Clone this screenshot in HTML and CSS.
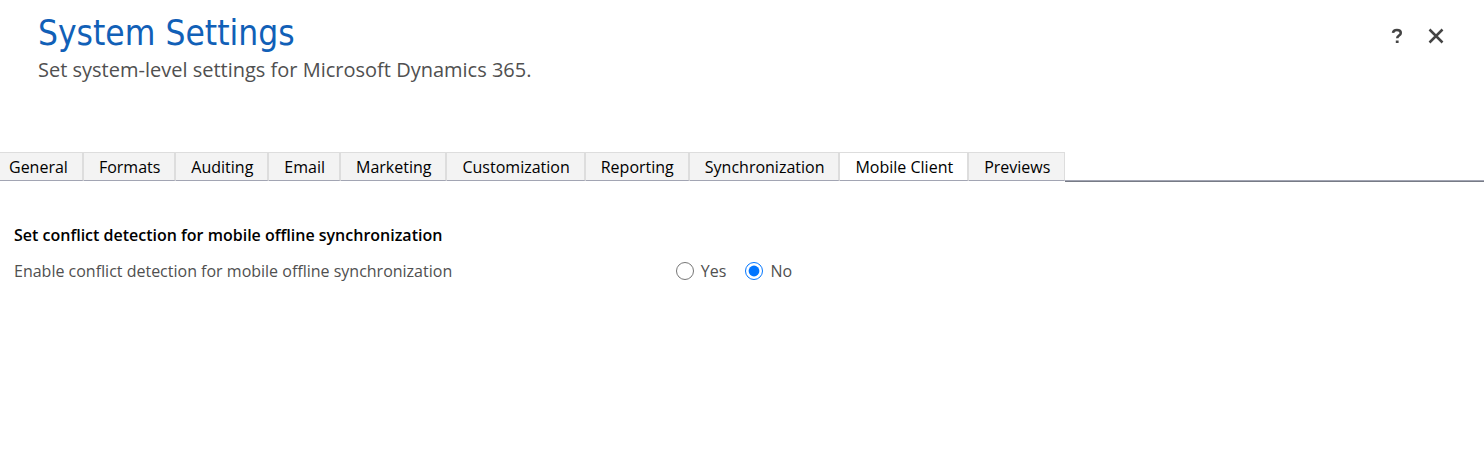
FILE: index.html
```html
<!DOCTYPE html>
<html lang="en">
<head>
<meta charset="utf-8">
<meta name="viewport" content="width=device-width, initial-scale=1">
<title>System Settings</title>
<link rel="stylesheet" href="styles.css">
</head>
<body>
<header class="header">
  <div class="heading">
    <h1 class="title">System Settings</h1>
    <p class="subtitle">Set system-level settings for Microsoft Dynamics 365.</p>
  </div>
  <div class="actions">
    <button class="icon-button" type="button" aria-label="Help">
      <svg class="icon" viewBox="0 0 16 16" aria-hidden="true"><path d="M4 4.800C4.200 2.900 5.800 2 7.900 2c2.300 0 3.900 1 3.900 2.900 0 2.700-3.600 2.600-3.600 5.400"/><path d="M8.200 12.500v2.500" stroke-width="2.800"/></svg>
    </button>
    <button class="icon-button" type="button" aria-label="Close">
      <svg class="icon" viewBox="0 0 16 16" aria-hidden="true"><path d="M1.500 1.500l13 13M14.500 1.500l-13 13"/></svg>
    </button>
  </div>
</header>
<nav class="tabs" aria-label="Settings">
  <a class="tab" href="#general">General</a>
  <a class="tab" href="#formats">Formats</a>
  <a class="tab" href="#auditing">Auditing</a>
  <a class="tab" href="#email">Email</a>
  <a class="tab" href="#marketing">Marketing</a>
  <a class="tab" href="#customization">Customization</a>
  <a class="tab" href="#reporting">Reporting</a>
  <a class="tab" href="#synchronization">Synchronization</a>
  <a class="tab tab-active" href="#mobile" aria-current="page">Mobile Client</a>
  <a class="tab" href="#previews">Previews</a>
  <span class="rule"></span>
</nav>
<main class="content" id="mobile">
  <h2 class="section-title">Set conflict detection for mobile offline synchronization</h2>
  <div class="setting" role="radiogroup" aria-labelledby="conflict-label">
    <span class="setting-label" id="conflict-label">Enable conflict detection for mobile offline synchronization</span>
    <div class="options">
      <label class="option"><input class="radio" type="radio" name="conflict" value="yes">Yes</label>
      <label class="option"><input class="radio" type="radio" name="conflict" value="no" checked>No</label>
    </div>
  </div>
</main>
</body>
</html>
```
FILE: styles.css
```css
* {
  box-sizing: border-box;
}

body {
  margin: 0;
  background: #fff;
  color: #000;
  font: 400 16px/24px "Open Sans", "Noto Sans", sans-serif;
}

.header {
  display: flex;
  justify-content: space-between;
  padding: 10px 36px 68px 38px;
}

.title {
  margin: 0;
  color: #1160b7;
  font: 400 35px/46px "DejaVu Sans Condensed", "DejaVu Sans", sans-serif;
}

.subtitle {
  margin: 0;
  color: #505050;
  font-size: 20px;
  line-height: 28px;
}

.actions {
  display: flex;
  gap: 15px;
  padding-top: 14px;
}

.icon-button {
  display: flex;
  align-items: center;
  justify-content: center;
  width: 24px;
  height: 24px;
  padding: 0;
  border: 0;
  background: none;
}

.icon {
  width: 16px;
  height: 16px;
  fill: none;
  stroke: #444;
  stroke-width: 2.5;
}

.tabs {
  display: flex;
}

.tab {
  height: 29px;
  padding: 2px 14px 0 15px;
  border-top: 1px solid #ddd;
  border-right: 2px solid #ddd;
  border-bottom: 1px solid #a2a5b3;
  background: #f3f3f3;
  color: #000;
  text-decoration: none;
  white-space: nowrap;
}

.tab:first-child {
  padding-left: 9px;
}

.tab:nth-last-child(2) {
  border-right-width: 1px;
}

.tab-active {
  background: #fff;
}

.rule {
  flex: 1;
  height: 30px;
  border-top: 28px solid transparent;
  background: linear-gradient(#a2a5b3 50%, #777b86 50%) padding-box;
}

.content {
  padding: 41px 14px;
}

.section-title {
  margin: 0 0 12px;
  font-size: 16px;
  font-weight: 600;
  line-height: 24px;
}

.setting {
  display: grid;
  grid-template-columns: 5fr 6fr;
  color: #505050;
}

.options {
  display: flex;
  gap: 19px;
}

.option {
  display: flex;
  align-items: center;
  gap: 7px;
}

.radio {
  width: 18px;
  height: 18px;
  margin: 0;
  accent-color: #0075ff;
}
```
